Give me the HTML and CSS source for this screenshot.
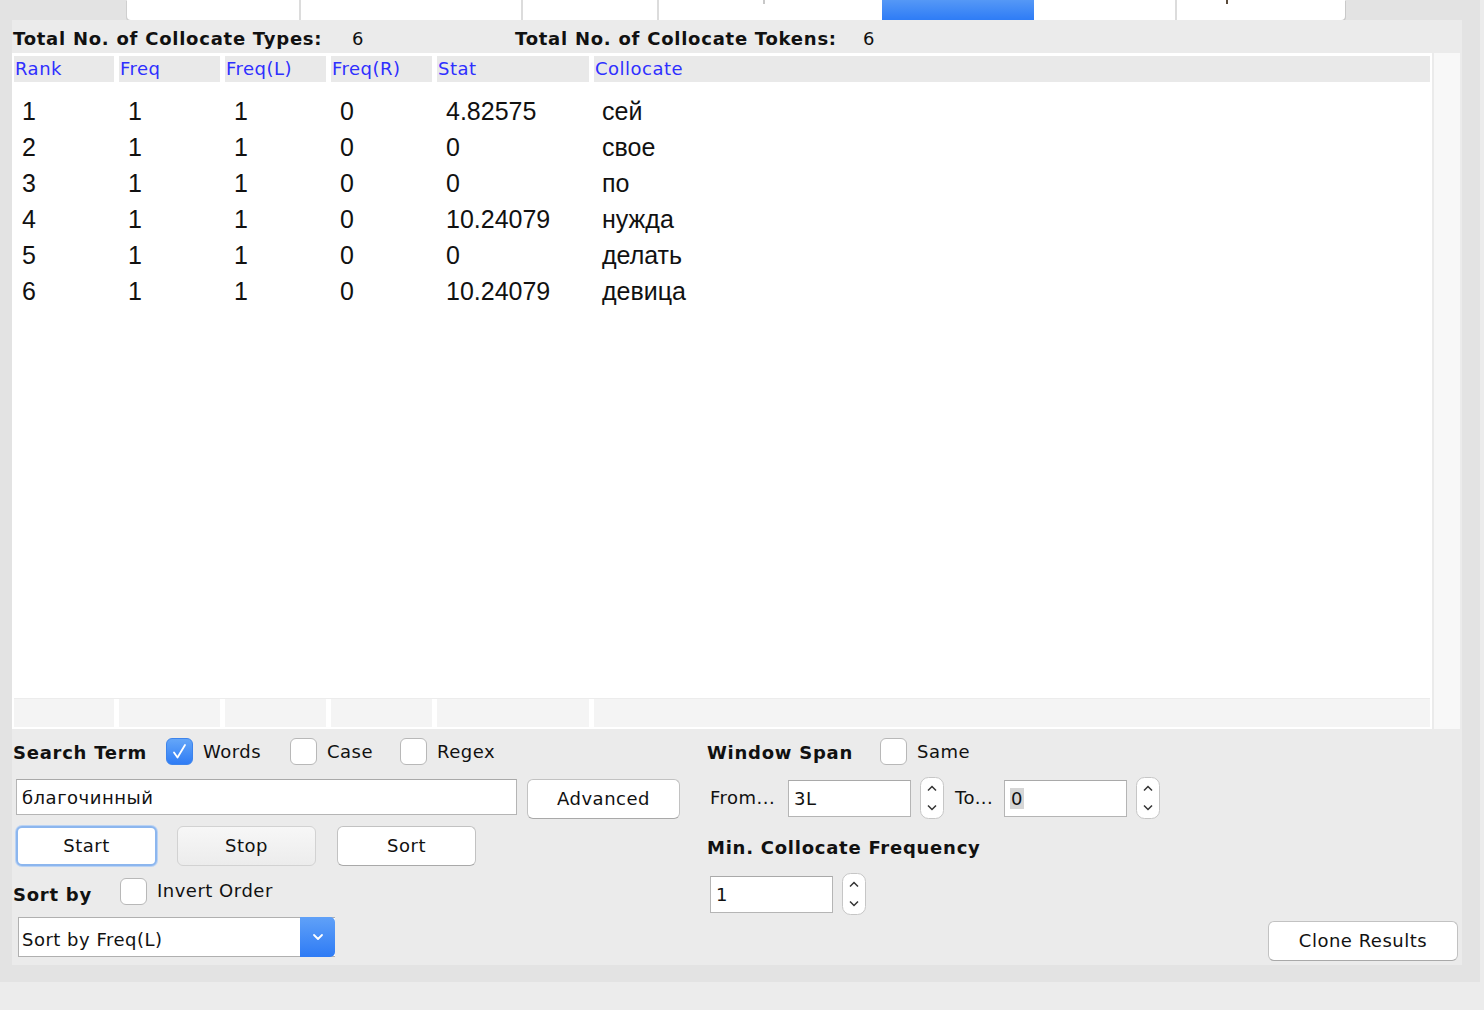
FILE: index.html
```
<!DOCTYPE html>
<html>
<head>
<meta charset="utf-8">
<link rel="stylesheet" href="styles.css">
</head>
<body>
<div class="frame">
  <div class="tabbar">
    <div class="tabs">
      <div class="tab w1"></div>
      <div class="tab w2 sep"></div>
      <div class="tab w3 sep"></div>
      <div class="tab w4 sep"><span class="mark m4"></span></div>
      <div class="tab w5 active"></div>
      <div class="tab w6"></div>
      <div class="tab w7 sep"><span class="mark m7"></span></div>
    </div>
  </div>
  <div class="panel">
    <div class="totals">
      <span class="blabel">Total No. of Collocate Types:</span>
      <span class="val">6</span>
      <span class="blabel">Total No. of Collocate Tokens:</span>
      <span class="val">6</span>
    </div>
    <div class="table">
      <div class="grid">
        <div class="row thead">
          <div class="hc">Rank</div>
          <div class="hc">Freq</div>
          <div class="hc">Freq(L)</div>
          <div class="hc">Freq(R)</div>
          <div class="hc">Stat</div>
          <div class="hc">Collocate</div>
        </div>
        <div class="tbody">
          <div class="row drow"><div>1</div><div>1</div><div>1</div><div>0</div><div>4.82575</div><div>сей</div></div>
          <div class="row drow"><div>2</div><div>1</div><div>1</div><div>0</div><div>0</div><div>свое</div></div>
          <div class="row drow"><div>3</div><div>1</div><div>1</div><div>0</div><div>0</div><div>по</div></div>
          <div class="row drow"><div>4</div><div>1</div><div>1</div><div>0</div><div>10.24079</div><div>нужда</div></div>
          <div class="row drow"><div>5</div><div>1</div><div>1</div><div>0</div><div>0</div><div>делать</div></div>
          <div class="row drow"><div>6</div><div>1</div><div>1</div><div>0</div><div>10.24079</div><div>девица</div></div>
        </div>
        <div class="row tfoot">
          <div></div><div></div><div></div><div></div><div></div><div></div>
        </div>
      </div>
      <div class="vscroll"></div>
    </div>
    <div class="controls">
      <div class="left">
        <div class="line l1">
          <span class="blabel st">Search Term</span>
          <span class="cb checked"><svg width="27" height="27" viewBox="0 0 27 27"><path d="M8 14.5 L11.5 19.5 L19 7" fill="none" stroke="#fff" stroke-width="1.8" stroke-linecap="round" stroke-linejoin="round"/></svg></span>
          <span class="cbl cw">Words</span>
          <span class="cb"></span>
          <span class="cbl cc">Case</span>
          <span class="cb"></span>
          <span class="cbl">Regex</span>
        </div>
        <div class="line l2">
          <div class="input search">благочинный</div>
          <div class="btn adv">Advanced</div>
        </div>
        <div class="line l3">
          <div class="btn start">Start</div>
          <div class="btn stop">Stop</div>
          <div class="btn sort">Sort</div>
        </div>
        <div class="line l4">
          <span class="blabel sb">Sort by</span>
          <span class="cb"></span>
          <span class="cbl inv">Invert Order</span>
        </div>
        <div class="line l5">
          <div class="select">
            <span class="seltext">Sort by Freq(L)</span>
            <span class="selbtn"><svg width="14" height="10" viewBox="0 0 14 10"><path d="M3 3 L7 7 L11 3" fill="none" stroke="#fff" stroke-width="1.8" stroke-linecap="round" stroke-linejoin="round"/></svg></span>
          </div>
        </div>
      </div>
      <div class="right">
        <div class="line r1">
          <span class="blabel ws">Window Span</span>
          <span class="cb"></span>
          <span class="cbl">Same</span>
        </div>
        <div class="line r2">
          <span class="rl from">From...</span>
          <div class="input num">3L</div>
          <span class="spin"><svg width="24" height="42" viewBox="0 0 24 42"><rect x="0.5" y="0.5" width="23" height="41" rx="8" fill="#fff" stroke="#c6c6c6"/><path d="M8 13.5 L12 9.5 L16 13.5" fill="none" stroke="#333" stroke-width="1.5"/><path d="M8 28.5 L12 32.5 L16 28.5" fill="none" stroke="#333" stroke-width="1.5"/></svg></span>
          <span class="rl to">To...</span>
          <div class="input num"><span class="selz">0</span></div>
          <span class="spin"><svg width="24" height="42" viewBox="0 0 24 42"><rect x="0.5" y="0.5" width="23" height="41" rx="8" fill="#fff" stroke="#c6c6c6"/><path d="M8 13.5 L12 9.5 L16 13.5" fill="none" stroke="#333" stroke-width="1.5"/><path d="M8 28.5 L12 32.5 L16 28.5" fill="none" stroke="#333" stroke-width="1.5"/></svg></span>
        </div>
        <div class="line r3">
          <span class="blabel">Min. Collocate Frequency</span>
        </div>
        <div class="line r4">
          <div class="input num minf">1</div>
          <span class="spin"><svg width="24" height="42" viewBox="0 0 24 42"><rect x="0.5" y="0.5" width="23" height="41" rx="8" fill="#fff" stroke="#c6c6c6"/><path d="M8 13.5 L12 9.5 L16 13.5" fill="none" stroke="#333" stroke-width="1.5"/><path d="M8 28.5 L12 32.5 L16 28.5" fill="none" stroke="#333" stroke-width="1.5"/></svg></span>
        </div>
      </div>
      <div class="clonecol">
        <div class="btn clone">Clone Results</div>
      </div>
    </div>
  </div>
</div>
</body>
</html>
```

FILE: styles.css
```
* { box-sizing: border-box; }
html, body { margin: 0; padding: 0; }
body {
  background: #ececec;
  font-family: "DejaVu Sans", sans-serif;
  font-size: 18px;
  letter-spacing: 0.5px;
  color: #111;
  width: 1484px;
  height: 1010px;
  overflow: hidden;
}
.frame {
  width: 1480px;
  height: 982px;
  background: #e3e3e3;
}
.tabbar {
  height: 20px;
  padding-left: 127px;
}
.tabs {
  display: flex;
  width: 1218px;
  height: 20px;
  background: #fff;
  border-radius: 0 0 4px 4px;
  box-shadow: 1px 1px 0 #c9c9c9, -1px 1px 0 #cfcfcf;
}
.tab { height: 20px; position: relative; }
.tab.sep { border-left: 2px solid #dcdcdc; }
.w1 { width: 172px; }
.w2 { width: 222px; }
.w3 { width: 136px; }
.w4 { width: 225px; }
.w5 { width: 152px; }
.w6 { width: 141px; }
.w7 { width: 170px; border-radius: 0 0 4px 0; }
.tab.active { background: linear-gradient(#5598f6, #2e7cf6); }
.mark { position: absolute; top: 0; width: 2px; height: 4px; background: #5a4a3a; }
.m4 { left: 104px; background: #c8c8c8; }
.m7 { left: 49px; }

.panel {
  margin-left: 12px;
  width: 1450px;
  height: 945px;
  background: #ebebeb;
  display: flex;
  flex-direction: column;
}
.blabel {
  font-weight: bold;
  letter-spacing: 0.75px;
  color: #111;
}
.totals {
  height: 33px;
  padding: 3px 0 0 1px;
  display: grid;
  grid-template-columns: 339px 163px 348px auto;
  align-items: center;
}
.val { letter-spacing: 0; }

.table {
  display: flex;
  height: 676px;
}
.grid {
  width: 1420px;
  background: #fff;
  padding: 3px 2px 2px 2px;
  display: flex;
  flex-direction: column;
}
.vscroll {
  width: 26px;
  margin-left: 2px;
  background: #f8f8f8;
}
.row {
  display: grid;
  grid-template-columns: 100px 101px 101px 101px 152px 1fr;
  column-gap: 5px;
}
.thead { height: 26px; }
.hc {
  background: #e9e9e9;
  color: #2f2fff;
  padding-left: 1px;
  line-height: 26px;
  font-size: 18px;
}
.tbody {
  flex: 1;
  padding-top: 11px;
}
.drow {
  height: 36px;
  font-family: "Liberation Sans", Arial, sans-serif;
  font-size: 25px;
  letter-spacing: 0;
  line-height: 36px;
  color: #111;
}
.drow div { padding-left: 9px; }
.drow div:first-child { padding-left: 8px; }
.drow div:last-child { padding-left: 8px; }
.tfoot {
  height: 29px;
  border-top: 1px solid #ececec;
}
.tfoot div { background: #f4f4f4; }

.controls {
  flex: 1;
  display: flex;
  padding-left: 1px;
}
.left { width: 694px; }
.line { display: flex; align-items: center; }
.cb {
  width: 27px;
  height: 27px;
  border: 1px solid #b8b8b8;
  border-radius: 6px;
  background: #fff;
  flex: none;
  display: block;
}
.cb.checked {
  background: linear-gradient(#64a6f8, #2f7cf5);
  border-color: #3d84ec;
}
.cb svg { display: block; margin: -1px; }
.cbl { margin-left: 10px; line-height: 22px; }
.l1 { margin-top: 9px; height: 27px; }
.st { width: 153px; margin-top: 2px; }
.cw { width: 87px; }
.cc { width: 73px; }

.input {
  background: #fff;
  border: 1px solid #b5b5b5;
  border-top-color: #a9a9a9;
  height: 36px;
  line-height: 35px;
  padding-left: 5px;
  font-size: 18px;
}
.l2 { margin-top: 14px; padding-left: 3px; align-items: flex-start; }
.search { width: 501px; }
.btn {
  background: #fff;
  border: 1px solid #c2c2c2;
  border-bottom-color: #a9a9a9;
  border-radius: 6px;
  height: 40px;
  line-height: 37px;
  text-align: center;
  font-size: 18px;
}
.adv { width: 153px; margin-left: 10px; }
.l3 { margin-top: 7px; padding-left: 3px; }
.start {
  width: 141px;
  border: 2px solid #8cb6ee;
  box-shadow: 0 0 0 1px #b9d2f4;
  line-height: 35px;
}
.stop {
  width: 139px;
  margin-left: 20px;
  background: linear-gradient(#f7f7f7, #ececec);
  border-color: #d2d2d2;
}
.sort { width: 139px; margin-left: 21px; }
.l4 { margin-top: 12px; height: 27px; }
.sb { width: 107px; margin-top: 6px; }
.inv { margin-top: -1px; }
.l5 { margin-top: 12px; padding-left: 5px; }
.select {
  width: 317px;
  height: 40px;
  display: flex;
  background: #fff;
  border: 1px solid #b0b0b0;
  border-right: none;
}
.seltext { flex: 1; line-height: 44px; padding-left: 3px; }
.selbtn {
  width: 35px;
  margin: -1px 0 -1px 0;
  background: linear-gradient(#60a1f8, #2e7bf5);
  border-radius: 0 5px 5px 0;
  display: flex;
  align-items: center;
  justify-content: center;
}
.selbtn svg { display: block; }

.right { width: 560px; padding-left: 0; }
.r1 { margin-top: 9px; height: 27px; }
.ws { width: 173px; margin-top: 2px; }
.r2 { margin-top: 12px; height: 42px; padding-left: 3px; }
.rl { line-height: 22px; }
.from { width: 78px; }
.num { width: 123px; height: 37px; line-height: 35px; }
.spin { display: block; margin-left: 9px; height: 42px; }
.spin svg { display: block; }
.to { margin-left: 11px; width: 49px; }
.selz { background: #d6d6d6; padding: 0 1px; }
.r3 { margin-top: 17px; height: 22px; }
.r4 { margin-top: 15px; height: 42px; padding-left: 3px; }
.minf { margin-top: 1px; }
.clonecol {
  flex: 1;
  display: flex;
  justify-content: flex-end;
  align-items: flex-end;
  padding: 0 4px 4px 0;
}
.clone { width: 190px; }
```
